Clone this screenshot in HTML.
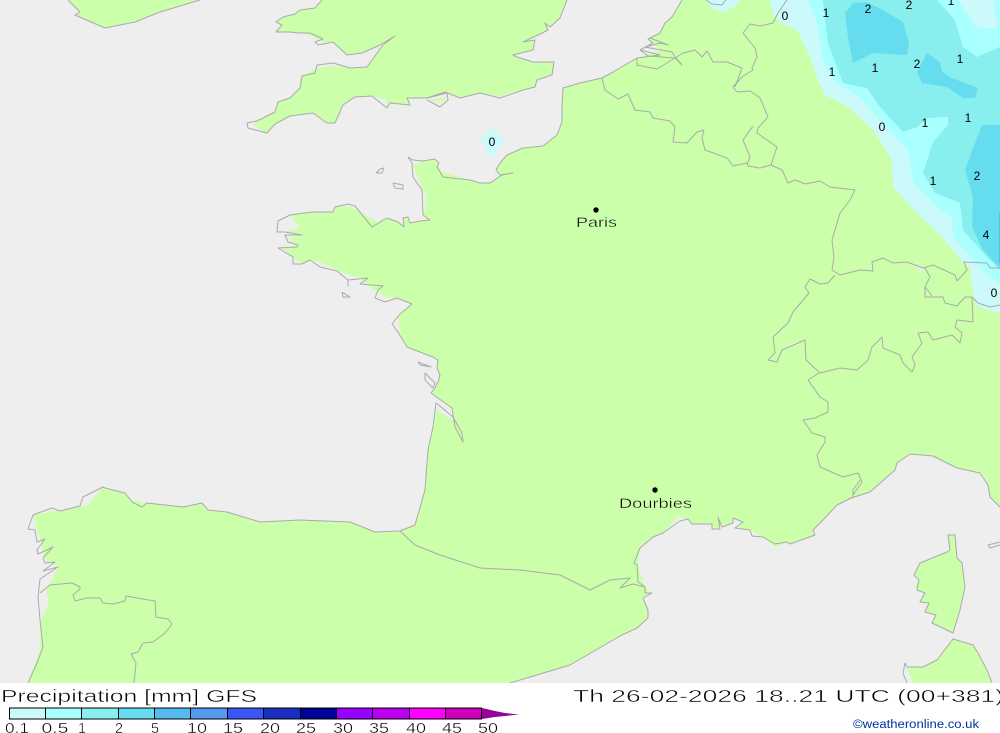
<!DOCTYPE html>
<html><head><meta charset="utf-8"><title>Precipitation GFS</title>
<style>
html,body{margin:0;padding:0;background:#fff;width:1000px;height:733px;overflow:hidden}
svg{display:block}
text{font-family:"Liberation Sans",sans-serif;fill:#000}
.n{font-size:12px;text-anchor:middle}
.c{fill:none;stroke:#aaaaaa;stroke-width:1;stroke-linejoin:round}
.l{fill:#ccffaa}
.k{font-size:14.5px;stroke:#fff;stroke-width:.35}
.t{font-size:17.5px;stroke:#fff;stroke-width:.45}
.m{font-size:14px;stroke:#ccffaa;stroke-width:.35}
</style></head><body>
<svg width="1000" height="733" viewBox="0 0 1000 733" xmlns="http://www.w3.org/2000/svg">
<rect width="1000" height="683" fill="#eeeeee"/>
<!-- land fill -->
<polygon class="l" points="68,0 80,12 75,15 105,28 135,22 160,12 200,0"/>
<polygon class="l" points="322,0 315,8 300,10 295,14 283,17 284,17 276,22 282,25 276,32 290,32 299,33 310,35 323,42 333,42 347,55 362,53 372,50 395,36 383,45 367,67 350,68 333,66 317,68 302,76 300,88 290,98 278,102 275,112 257,121 253,125 267,133 275,124 290,116 313,113 327,123 335,123 343,105 355,97 372,96 387,100 387,108 390,103 410,105 407,98 427,98 445,92 460,98 480,93 500,96 523,90 535,87 537,80 552,75 554,62 533,62 517,57 513,55 533,50 535,40 523,42 538,35 548,30 545,23 550,27 560,18 567,0"/>
<polygon class="l" points="28,683 40,650 41,620 49,602 46,590 58,567 45,560 40,540 33,515 88,505 103,487 125,493 132,500 147,503 183,507 202,503 208,510 227,512 260,522 300,520 350,522 375,532 405,530 415,525 425,490 428,450 433,430 436,410 453,420 452,408 431,393 435,388 438,382 440,375 437,368 438,360 433,357 407,347 400,332 398,316 412,304 397,298 385,297 375,291 368,285 360,278 348,275 320,262 310,260 302,264 293,257 282,248 298,245 288,239 302,235 285,232 300,228 290,215 312,212 320,212 333,212 335,207 350,206 377,222 387,218 398,222 404,227 403,218 408,217 410,223 430,220 423,215 427,195 423,190 413,165 423,161 435,159 442,172 470,180 480,183 490,183 502,175 513,173 500,175 496,170 500,163 507,155 523,148 543,146 557,135 562,122 562,107 563,88 580,83 602,78 613,72 637,58 660,50 653,43 648,39 660,33 665,23 672,17 682,0 1000,0 1000,507 990,497 987,480 980,473 957,468 933,456 910,454 897,463 895,470 887,477 870,492 853,497 837,505 823,520 813,530 815,535 790,544 787,542 775,547 763,537 750,530 735,528 743,522 733,518 733,523 722,527 718,517 720,529 712,529 712,524 692,524 688,519 678,517 663,533 653,537 640,548 638,565 645,587 652,593 643,598 648,610 648,618 637,628 620,636 570,665 510,683"/>
<polygon class="l" points="948,535 955,535 957,558 962,563 965,587 960,610 953,633 932,623 936,615 925,612 929,603 920,602 925,593 914,587 919,580 914,575 920,563 947,552 950,550"/>
<polygon class="l" points="905,663 907,667 923,667 937,660 953,639 973,645 978,653 987,670 992,683 913,683"/>
<polygon class="l" points="427,100 447,97 443,102"/>
<polygon points="782,351 805,340 788,345 776,358" fill="#eeeeee"/>
<polygon points="905,260 924,268 921,272 918,268" fill="#eeeeee"/>
<!-- precip -->
<polygon fill="#ccfafa" points="706,0 712,8 722,12 733,8 740,0"/>
<polygon fill="#ccfafa" points="492,128 502,137 503,143 492,158 485,148 481,140 484,134"/>
<polygon fill="#ccfafa" points="770,0 773,13 780,23 797,30 810,57 818,80 825,95 850,108 873,130 892,160 893,187 917,213 942,237 963,262 970,267 973,293 978,307 1000,313 1000,0"/>
<polygon fill="#aaffff" points="807,0 817,23 822,57 833,80 860,98 875,115 908,150 913,182 940,210 952,217 953,237 973,260 990,277 1000,283 1000,0"/>
<polygon fill="#88eeee" points="823,0 828,43 843,83 867,88 880,107 903,132 917,127 927,118 948,117 948,125 933,142 923,173 935,193 960,203 963,230 987,257 1000,270 1000,47 977,57 963,47 955,20 937,0"/>
<polygon fill="#ccfafa" points="958,0 973,23 980,28 998,28 993,0"/>
<polygon fill="#66ddee" points="845,13 853,3 867,2 883,10 903,22 909,43 907,55 873,53 853,63 848,37"/>
<polygon fill="#66ddee" points="927,53 940,62 942,72 952,78 978,88 975,98 963,98 947,87 922,83 917,72"/>
<polygon fill="#66ddee" points="1000,125 982,125 965,170 973,197 972,227 983,250 1000,268"/>
<rect x="999" y="213" width="1" height="50" fill="#55bbee"/>
<!-- coast -->
<polyline class="c" points="68,0 80,12 75,15 105,28 135,22 160,12 200,0"/>
<polyline class="c" points="322,0 315,8 300,10 295,14 283,17 276,22 282,25 276,32 290,32 299,33 310,33 323,39 315,42 318,45 333,42 347,55 362,53 380,45 395,36 383,45 367,67 350,68 333,63 317,65 315,73 302,76 300,88 290,98 278,102 275,112 257,121 247,123 248,128 267,133 275,124 290,116 313,113 327,123 335,123 343,105 355,97 372,96 387,108 390,103 410,105 407,98 427,98 445,92 460,98 480,93 500,98 523,90 535,87 537,80 552,75 554,62 533,62 517,57 513,55 533,50 535,40 523,42 538,35 548,30 545,23 550,27 560,18 567,0"/>
<polyline class="c" points="427,98 447,93 448,100 440,107 427,100"/>
<polyline class="c" points="602,78 580,83 563,88 562,107 562,122 557,135 543,146 523,148 507,155 500,163 496,170 500,175 513,173 502,175 490,183 480,183 470,180 443,177 437,167 439,163 435,159 423,161 413,160 408,157 412,163 413,177 422,190 423,215 430,220 420,221 410,223 408,217 403,218 404,227 398,222 387,218 372,227 355,206 348,204 335,207 333,212 320,212 312,212 290,215 278,221 277,232 285,232 302,235 285,235 288,242 298,245 297,247 278,248 293,257 293,264 302,264 310,260 320,267 337,271 348,280 348,286 348,280 368,278 360,284 383,286 378,290 375,298 385,302 397,298 412,304 400,314 392,324 398,332 407,347 433,357 438,360 437,368 440,375 438,382 435,388 431,393 452,408 455,427 463,442 462,433 453,417 440,406 436,403 433,427 428,450 425,490 415,525 400,531 375,532 350,522 300,520 260,522 227,512 208,510 202,503 183,507 147,503 142,507 132,502 125,493 105,488 103,487 83,497 80,506 60,511 52,508 33,515 28,529 35,530 37,542 45,539 37,550 38,554 53,547 43,558 45,563 55,562 43,571 58,567 40,579 38,597 40,620 43,647 37,663 28,683"/>
<polyline class="c" points="40,593 50,585 72,583 80,587 80,589 73,595 75,601 87,598 100,598 103,603 113,604 125,601 126,596 137,598 155,601 156,617 168,619 172,624 165,633 153,642 143,643 138,652 131,654 136,663 134,683"/>
<polyline class="c" points="400,531 415,545 440,555 480,568 520,570 560,575 590,590 610,580 630,578 620,588 633,584 645,587 645,593 652,593 643,598 648,610 648,618 637,628 620,636 570,665 510,683"/>
<polyline class="c" points="645,587 638,582 637,565 634,563 640,548 653,537 663,533 680,521 688,519 692,524 712,524 712,529 720,529 718,517 722,527 733,523 733,518 743,522 735,528 750,530 752,536 763,537 775,544 787,542 790,544 815,535 813,530 823,520 837,505 853,497 853,490 860,480"/>
<polyline class="c" points="848,499 870,492 887,477 895,470 897,463 910,454 933,456 957,468 980,473 988,485 990,497 1000,507"/>
<polyline class="c" points="1000,542 988,545 990,548 1000,545"/>
<polyline class="c" points="948,535 955,535 957,558 962,563 965,587 960,610 953,633 932,623 936,615 925,612 929,603 920,602 925,593 917,590 919,580 914,575 920,563 947,552 950,550 948,535"/>
<polyline class="c" points="907,683 903,673 905,663 907,667 923,667 937,660 953,639 973,645 978,653 987,670 992,683"/>
<polyline class="c" points="602,78 613,72 637,58 660,55 640,50 653,43 648,39 660,33 665,23 672,17 682,0"/>
<polyline class="c" points="640,50 648,56 675,58 682,65 676,58 672,52 645,47 660,43 668,45 650,38"/>
<polyline class="c" points="706,0 712,4 722,5 726,0"/>
<polyline class="c" points="602,78 605,90 618,99 628,94 635,110 650,112 653,118 670,121 675,127 673,142 687,143 697,132 704,130 702,138 705,150 727,158 733,166 747,163 748,166 760,168 771,165 782,170 788,183 795,180 805,184 820,181 830,187 855,190 850,200 840,213 832,240 834,257 832,270 840,275 860,270 873,271 872,262 883,258 893,263 907,262 923,268 933,265 955,275 957,281 967,270 964,262 987,263 990,268 1000,268"/>
<polyline class="c" points="835,275 828,283 820,284 810,279 805,287 809,293 793,312 788,323 773,337 775,353 768,360 777,362 782,350 805,340 806,360 820,373 840,368 857,370 868,360 872,347 882,337 883,348 900,355 903,363 912,372 915,365 912,357 922,343 918,333 928,332 933,340 952,335 960,343 962,333 955,327 957,320 973,322 972,297 978,303 990,307 1000,305"/>
<polyline class="c" points="925,297 943,297 945,303 957,306 965,297 972,297"/>
<polyline class="c" points="925,297 925,287 930,277 925,268"/>
<polyline class="c" points="932,296 925,287"/>
<polyline class="c" points="819,373 808,380 820,397 828,402 828,412 815,418 803,420 812,433 825,437 825,442 817,455 820,467 843,477 858,473 862,482 853,495"/>
<polyline class="c" points="787,0 778,13 773,23 760,26 750,24 743,33 755,48 757,57 752,68 753,70 742,77 733,87 737,92 750,91 760,98 768,117 758,128 757,133 777,147 771,165"/>
<polyline class="c" points="637,58 637,65 657,69 675,58 683,53 695,50 702,57 707,51 713,62 727,62 742,68 735,87"/>
<polyline class="c" points="753,126 743,140 750,157 747,165"/>
<polyline class="c" points="376,173 380,169 384,168 382,173 376,173"/>
<polyline class="c" points="393,183 403,185 403,189 395,188 393,183"/>
<polyline class="c" points="342,292 350,297 343,297 342,292"/>
<polyline class="c" points="418,362 431,367 420,365 418,362"/>
<polyline class="c" points="425,373 435,383 433,388 425,380 425,373"/>
<!-- labels -->
<circle cx="596" cy="210" r="2.7" fill="#000"/>
<circle cx="655" cy="490" r="2.7" fill="#000"/>
<text class="m" x="576" y="227" textLength="41" lengthAdjust="spacingAndGlyphs">Paris</text>
<text class="m" x="619" y="508" textLength="73" lengthAdjust="spacingAndGlyphs">Dourbies</text>
<text class="n" x="492" y="146">0</text>
<text class="n" x="785" y="20">0</text>
<text class="n" x="826" y="17">1</text>
<text class="n" x="868" y="13">2</text>
<text class="n" x="909" y="9">2</text>
<text class="n" x="951" y="5">1</text>
<text class="n" x="832" y="76">1</text>
<text class="n" x="875" y="72">1</text>
<text class="n" x="917" y="68">2</text>
<text class="n" x="960" y="63">1</text>
<text class="n" x="882" y="131">0</text>
<text class="n" x="925" y="127">1</text>
<text class="n" x="968" y="122">1</text>
<text class="n" x="933" y="185">1</text>
<text class="n" x="977" y="180">2</text>
<text class="n" x="986" y="239">4</text>
<text class="n" x="994" y="297">0</text>
<!-- footer -->
<rect y="683" width="1000" height="50" fill="#fff"/>
<text class="t" x="1" y="702" textLength="256" lengthAdjust="spacingAndGlyphs">Precipitation [mm] GFS</text>
<text class="t" x="573" y="702" textLength="431" lengthAdjust="spacingAndGlyphs">Th 26-02-2026 18..21 UTC (00+381)</text>
<text x="853" y="728" font-size="11.5" style="fill:#003399" textLength="126" lengthAdjust="spacingAndGlyphs">©weatheronline.co.uk</text>
<g stroke="#000" stroke-width="1" shape-rendering="crispEdges">
<rect x="9.5" y="708" width="36" height="11" fill="#ccfafa"/>
<rect x="45.5" y="708" width="36" height="11" fill="#aaffff"/>
<rect x="81.5" y="708" width="37" height="11" fill="#88eeee"/>
<rect x="118.5" y="708" width="36" height="11" fill="#66ddee"/>
<rect x="154.5" y="708" width="36" height="11" fill="#55bbee"/>
<rect x="190.5" y="708" width="37" height="11" fill="#5599ee"/>
<rect x="227.5" y="708" width="36" height="11" fill="#3b55f5"/>
<rect x="263.5" y="708" width="37" height="11" fill="#1a2fc0"/>
<rect x="300.5" y="708" width="36" height="11" fill="#000099"/>
<rect x="336.5" y="708" width="36" height="11" fill="#9900ff"/>
<rect x="372.5" y="708" width="37" height="11" fill="#bb00ee"/>
<rect x="409.5" y="708" width="36" height="11" fill="#ff00ff"/>
<rect x="445.5" y="708" width="36" height="11" fill="#cc00bb"/>
</g>
<polygon points="482,708 495,711 505,713 519,714.5 505,716 495,717 482,719" fill="#990099"/>
<g text-anchor="middle">
<text class="k" x="17" y="733" textLength="24" lengthAdjust="spacingAndGlyphs">0.1</text>
<text class="k" x="55" y="733" textLength="27" lengthAdjust="spacingAndGlyphs">0.5</text>
<text class="k" x="82" y="733">1</text>
<text class="k" x="119" y="733">2</text>
<text class="k" x="155" y="733">5</text>
<text class="k" x="197" y="733" textLength="20" lengthAdjust="spacingAndGlyphs">10</text>
<text class="k" x="233" y="733" textLength="20" lengthAdjust="spacingAndGlyphs">15</text>
<text class="k" x="270" y="733" textLength="20" lengthAdjust="spacingAndGlyphs">20</text>
<text class="k" x="306" y="733" textLength="20" lengthAdjust="spacingAndGlyphs">25</text>
<text class="k" x="343" y="733" textLength="20" lengthAdjust="spacingAndGlyphs">30</text>
<text class="k" x="379" y="733" textLength="20" lengthAdjust="spacingAndGlyphs">35</text>
<text class="k" x="416" y="733" textLength="20" lengthAdjust="spacingAndGlyphs">40</text>
<text class="k" x="452" y="733" textLength="20" lengthAdjust="spacingAndGlyphs">45</text>
<text class="k" x="488" y="733" textLength="20" lengthAdjust="spacingAndGlyphs">50</text>
</g>
</svg>
</body></html>
